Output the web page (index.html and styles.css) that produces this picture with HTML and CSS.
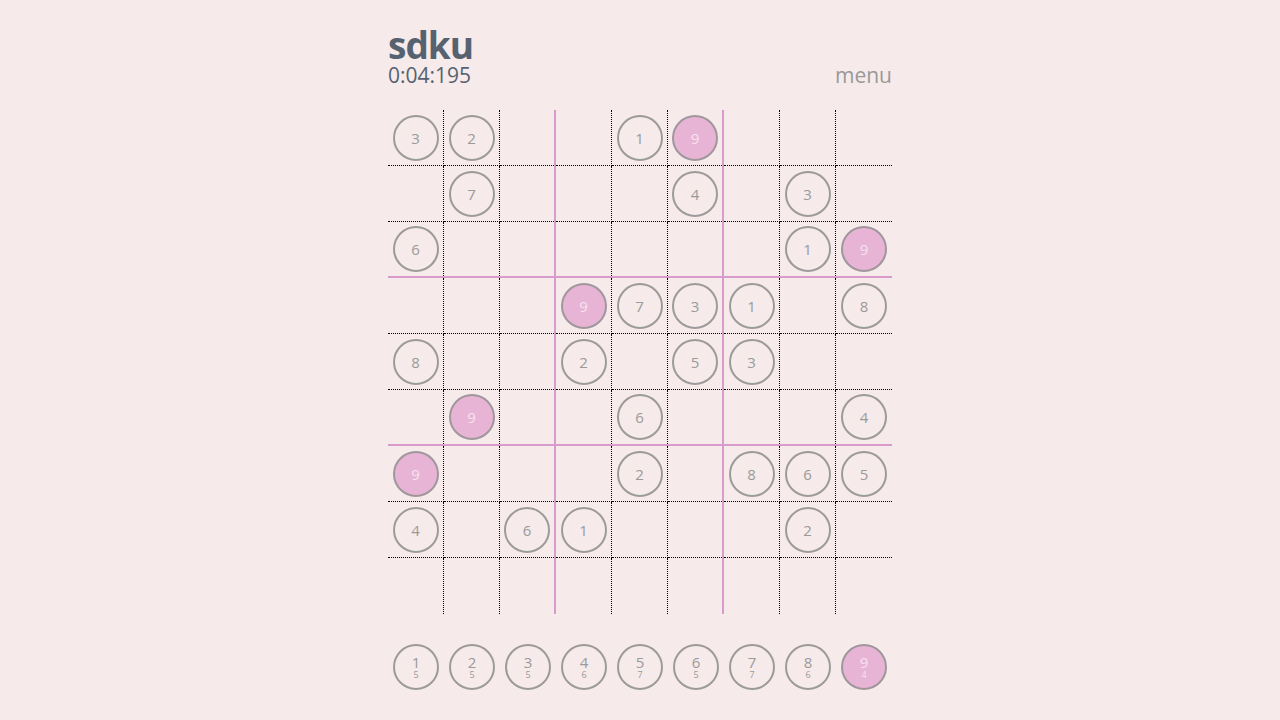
FILE: index.html
```html
<!DOCTYPE html>
<html>
<head>
<meta charset="utf-8">
<link rel="stylesheet" href="styles.css">
</head>
<body>
<div class="app">
  <header class="top">
    <div class="titles">
      <div class="title">sdku</div>
      <div class="timer">0:04:195</div>
    </div>
    <div class="menu">menu</div>
  </header>
  <div class="grid">
    <div class="cell"><span class="disc">3</span></div>
    <div class="cell"><span class="disc">2</span></div>
    <div class="cell"></div>
    <div class="cell"></div>
    <div class="cell"><span class="disc">1</span></div>
    <div class="cell"><span class="disc hl">9</span></div>
    <div class="cell"></div>
    <div class="cell"></div>
    <div class="cell"></div>

    <div class="cell"></div>
    <div class="cell"><span class="disc">7</span></div>
    <div class="cell"></div>
    <div class="cell"></div>
    <div class="cell"></div>
    <div class="cell"><span class="disc">4</span></div>
    <div class="cell"></div>
    <div class="cell"><span class="disc">3</span></div>
    <div class="cell"></div>

    <div class="cell"><span class="disc">6</span></div>
    <div class="cell"></div>
    <div class="cell"></div>
    <div class="cell"></div>
    <div class="cell"></div>
    <div class="cell"></div>
    <div class="cell"></div>
    <div class="cell"><span class="disc">1</span></div>
    <div class="cell"><span class="disc hl">9</span></div>

    <div class="cell"></div>
    <div class="cell"></div>
    <div class="cell"></div>
    <div class="cell"><span class="disc hl">9</span></div>
    <div class="cell"><span class="disc">7</span></div>
    <div class="cell"><span class="disc">3</span></div>
    <div class="cell"><span class="disc">1</span></div>
    <div class="cell"></div>
    <div class="cell"><span class="disc">8</span></div>

    <div class="cell"><span class="disc">8</span></div>
    <div class="cell"></div>
    <div class="cell"></div>
    <div class="cell"><span class="disc">2</span></div>
    <div class="cell"></div>
    <div class="cell"><span class="disc">5</span></div>
    <div class="cell"><span class="disc">3</span></div>
    <div class="cell"></div>
    <div class="cell"></div>

    <div class="cell"></div>
    <div class="cell"><span class="disc hl">9</span></div>
    <div class="cell"></div>
    <div class="cell"></div>
    <div class="cell"><span class="disc">6</span></div>
    <div class="cell"></div>
    <div class="cell"></div>
    <div class="cell"></div>
    <div class="cell"><span class="disc">4</span></div>

    <div class="cell"><span class="disc hl">9</span></div>
    <div class="cell"></div>
    <div class="cell"></div>
    <div class="cell"></div>
    <div class="cell"><span class="disc">2</span></div>
    <div class="cell"></div>
    <div class="cell"><span class="disc">8</span></div>
    <div class="cell"><span class="disc">6</span></div>
    <div class="cell"><span class="disc">5</span></div>

    <div class="cell"><span class="disc">4</span></div>
    <div class="cell"></div>
    <div class="cell"><span class="disc">6</span></div>
    <div class="cell"><span class="disc">1</span></div>
    <div class="cell"></div>
    <div class="cell"></div>
    <div class="cell"></div>
    <div class="cell"><span class="disc">2</span></div>
    <div class="cell"></div>

    <div class="cell"></div>
    <div class="cell"></div>
    <div class="cell"></div>
    <div class="cell"></div>
    <div class="cell"></div>
    <div class="cell"></div>
    <div class="cell"></div>
    <div class="cell"></div>
    <div class="cell"></div>
  </div>
  <div class="pad">
    <div class="key"><span class="disc stack"><span class="num">1</span><span class="count">5</span></span></div>
    <div class="key"><span class="disc stack"><span class="num">2</span><span class="count">5</span></span></div>
    <div class="key"><span class="disc stack"><span class="num">3</span><span class="count">5</span></span></div>
    <div class="key"><span class="disc stack"><span class="num">4</span><span class="count">6</span></span></div>
    <div class="key"><span class="disc stack"><span class="num">5</span><span class="count">7</span></span></div>
    <div class="key"><span class="disc stack"><span class="num">6</span><span class="count">5</span></span></div>
    <div class="key"><span class="disc stack"><span class="num">7</span><span class="count">7</span></span></div>
    <div class="key"><span class="disc stack"><span class="num">8</span><span class="count">6</span></span></div>
    <div class="key"><span class="disc stack hl"><span class="num">9</span><span class="count">4</span></span></div>
  </div>
</div>
</body>
</html>
```
FILE: styles.css
```css
html, body {
  margin: 0;
  padding: 0;
  background: #f6eaea;
}
body {
  font-family: "Open Sans", "Noto Sans", sans-serif;
}
.app {
  width: 504px;
  margin: 0 auto;
  padding-top: 26px;
}
.top {
  display: flex;
  justify-content: space-between;
  align-items: flex-end;
}
.title {
  font-size: 37px;
  line-height: 38px;
  font-weight: 700;
  color: #566270;
  letter-spacing: -1px;
}
.timer {
  font-size: 21px;
  line-height: 22px;
  color: #566270;
}
.menu {
  font-size: 21px;
  line-height: 22px;
  color: #999999;
}
.grid {
  margin-top: 24px;
  display: grid;
  grid-template-columns: repeat(9, 56px);
  grid-auto-rows: 56px;
}
.cell {
  box-sizing: border-box;
  display: flex;
  align-items: center;
  justify-content: center;
  border-right: 1px dotted #000000;
  border-bottom: 1px dotted #000000;
}
.cell:nth-child(9n+3),
.cell:nth-child(9n+6) {
  border-right: 2px solid #d99bcb;
}
.cell:nth-child(9n) {
  border-right: none;
}
.cell:nth-child(n+19):nth-child(-n+27),
.cell:nth-child(n+46):nth-child(-n+54) {
  border-bottom: 2px solid #d99bcb;
}
.cell:nth-child(n+73) {
  border-bottom: none;
}
.disc {
  box-sizing: border-box;
  width: 46px;
  height: 46px;
  border: 2px solid #9d9a9b;
  border-radius: 50%;
  display: flex;
  align-items: center;
  justify-content: center;
  font-size: 15px;
  color: #9a9a9a;
}
.disc.hl {
  background: #e8b4d5;
  color: #f7e2ef;
  border-color: #a0979c;
}
.pad {
  margin-top: 25px;
  display: grid;
  grid-template-columns: repeat(9, 56px);
}
.key {
  height: 56px;
  display: flex;
  align-items: center;
  justify-content: center;
}
.stack {
  flex-direction: column;
}
.num {
  font-size: 15px;
  line-height: 15px;
}
.count {
  font-size: 9px;
  line-height: 9px;
}
```
